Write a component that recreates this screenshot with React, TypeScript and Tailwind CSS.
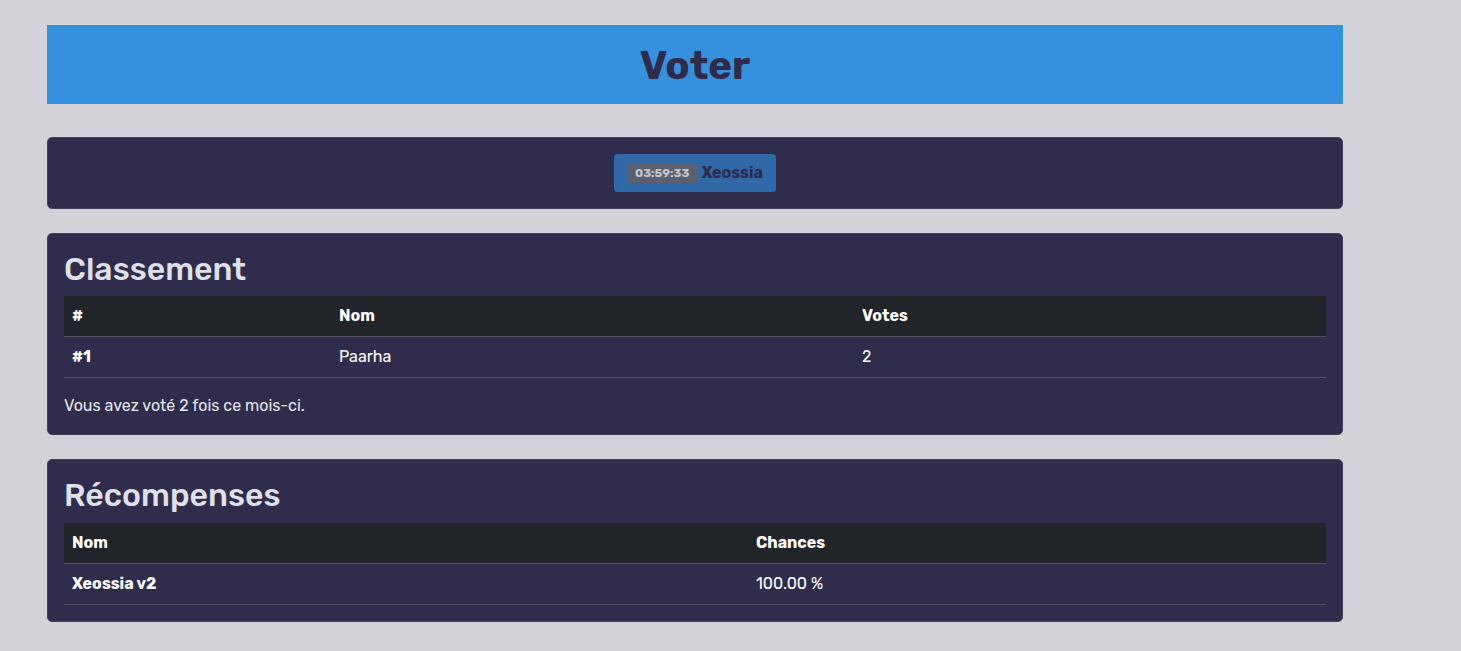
import React from "react";

const font = { fontFamily: "Rubik, Inter, 'Noto Sans', sans-serif" };

export default function App() {
  return (
    <div className="min-h-[651px] w-full bg-[#d3d2d8]" style={font}>
      <div className="w-[1296px] ml-[47px] pt-[25px] pb-8 flex flex-col">
        <div className="h-[79px] bg-[#3590dd] flex items-center justify-center">
          <h1 className="text-[40px] font-bold text-[#2f2b4a] leading-none mt-[2px]">Voter</h1>
        </div>

        <div className="mt-[33px] bg-[#302c4b] border border-[#45415f] rounded-[5px] p-4 flex justify-center">
          <div className="h-[38px] px-[13px] bg-[#3068a8] rounded-[4px] flex items-center gap-[4px]">
            <span className="bg-[#5b6071] text-[#c6c7cf] text-[12px] font-bold rounded-[4px] px-[8px] h-[20px] flex items-center">03:59:33</span>
            <span className="text-[#2f2b4a] text-[16px] font-bold">Xeossia</span>
          </div>
        </div>

        <div className="mt-6 bg-[#302c4b] border border-[#45415f] rounded-[5px] p-4 text-white">
          <h2 className="text-[32px] font-medium leading-[1.2] mb-2 text-[#dfe0ea]">Classement</h2>
          <table className="w-full text-[16px] leading-6 border-collapse mb-4">
            <thead>
              <tr className="bg-[#212428] border-b border-[#55555f]">
                <th className="text-left font-bold p-2 w-[267px]">#</th>
                <th className="text-left font-bold p-2 w-[523px]">Nom</th>
                <th className="text-left font-bold p-2">Votes</th>
              </tr>
            </thead>
            <tbody>
              <tr className="border-b border-[#55555f]">
                <td className="font-bold p-2">#1</td>
                <td className="p-2">Paarha</td>
                <td className="p-2">2</td>
              </tr>
            </tbody>
          </table>
          <p className="text-[16px] leading-6 text-[#e6e6ee]">Vous avez voté 2 fois ce mois-ci.</p>
        </div>

        <div className="mt-6 bg-[#302c4b] border border-[#45415f] rounded-[5px] p-4 text-white">
          <h2 className="text-[32px] font-medium leading-[1.2] mb-2 text-[#dfe0ea]">Récompenses</h2>
          <table className="w-full text-[16px] leading-6 border-collapse">
            <thead>
              <tr className="bg-[#212428] border-b border-[#55555f]">
                <th className="text-left font-bold p-2 w-[684px]">Nom</th>
                <th className="text-left font-bold p-2">Chances</th>
              </tr>
            </thead>
            <tbody>
              <tr className="border-b border-[#55555f]">
                <td className="font-bold p-2">Xeossia v2</td>
                <td className="p-2">100.00 %</td>
              </tr>
            </tbody>
          </table>
        </div>
      </div>
    </div>
  );
}
